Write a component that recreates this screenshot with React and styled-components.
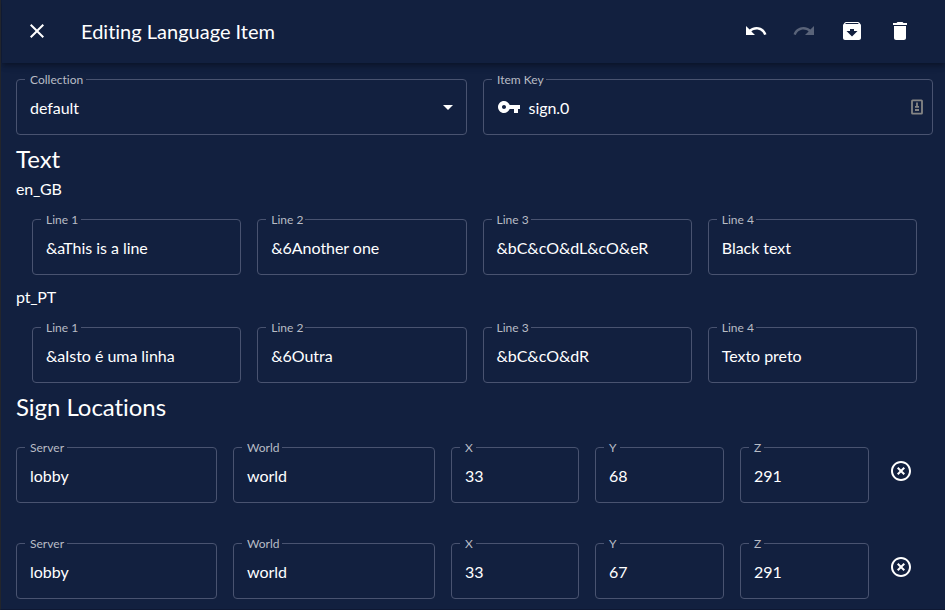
import React from "react";
import styled, { createGlobalStyle } from "styled-components";

const GlobalStyle = createGlobalStyle`
  * { box-sizing: border-box; }
  body { margin: 0; background: #12203f; overflow: hidden; }
`;

const Page = styled.main`
  height: 610px;
  padding-left: 1px;
  border-left: 1px solid #22252c;
  border-bottom: 1px solid #0e1833;
  background: #12203f;
  color: #fff;
  font-family: Lato, sans-serif;
  font-size: 16px;
  font-variant-ligatures: none;
  overflow: hidden;
`;

const Toolbar = styled.header`
  height: 63px;
  padding: 0 21px 0 11px;
  display: flex;
  align-items: center;
  box-shadow: 0 2px 4px -1px rgba(0, 0, 0, 0.2), 0 4px 5px rgba(0, 0, 0, 0.14), 0 1px 10px rgba(0, 0, 0, 0.12);
`;

const IconButton = styled.button`
  width: 48px;
  height: 48px;
  padding: 0 0 1px;
  display: flex;
  align-items: center;
  justify-content: center;
  border: 0;
  background: none;
  color: ${(p) => (p.disabled ? "rgba(255, 255, 255, 0.3)" : "#fff")};
`;

const Icon = styled.svg`
  width: 24px;
  height: 24px;
  flex: none;
  fill: currentColor;
`;

const Title = styled.h1`
  flex: 1;
  margin: 0 0 2px 20px;
  font-size: 20px;
  font-weight: 400;
  line-height: 32px;
`;

const Content = styled.div`
  padding: 16px 12px 0 14px;
`;

const Row = styled.div`
  display: grid;
  grid-template-columns: ${(p) => p.$columns};
  column-gap: 16px;
  margin: ${(p) => p.$margin || "0"};
`;

const FieldBox = styled.fieldset`
  height: 61px;
  min-width: 0;
  margin: -5px 0 0;
  padding: 0 8px;
  border: 1px solid #495370;
  border-radius: 4px;
`;

const FieldLabel = styled.legend`
  height: 11px;
  padding: 0 ${(p) => (p.$tight ? 2 : 3)}px 0 5px;
  color: #b8bcc5;
  font-size: 12px;
  line-height: 11px;
  letter-spacing: 0.02px;
  white-space: nowrap;
`;

const FieldBody = styled.div`
  height: 44px;
  padding: 0 5px;
  display: flex;
  align-items: center;
`;

const Value = styled.span`
  flex: 1;
  white-space: nowrap;
  line-height: 19px;
  letter-spacing: -0.04px;
`;

const Adornment = styled.span`
  display: flex;
  margin: ${(p) => p.$margin};
`;

const SectionTitle = styled.h2`
  margin: 0;
  font-size: 24px;
  font-weight: 400;
  line-height: 32px;
  letter-spacing: -0.05px;
`;

const Locale = styled.p`
  margin: 0;
  padding-top: 2px;
  line-height: 24px;
  letter-spacing: -0.2px;
`;

const RemoveButton = styled(IconButton)`
  width: 32px;
  height: 49px;
`;

const paths = {
  close: "M19 6.41L17.59 5 12 10.59 6.41 5 5 6.41 10.59 12 5 17.59 6.41 19 12 13.41 17.59 19 19 17.59 13.41 12z",
  undo: "M12.5 8c-2.65 0-5.05.99-6.9 2.6L2 7v9h9l-3.62-3.62c1.39-1.16 3.16-1.88 5.12-1.88 3.54 0 6.55 2.31 7.6 5.5l2.37-.78C21.08 11.03 17.15 8 12.5 8z",
  redo: "M18.4 10.6C16.55 8.99 14.15 8 11.5 8c-4.65 0-8.58 3.03-9.96 7.22L3.9 16c1.05-3.19 4.05-5.5 7.6-5.5 1.95 0 3.73.72 5.12 1.88L13 16h9V7l-3.6 3.6z",
  archive: "M20.54 5.23l-1.39-1.68C18.88 3.21 18.47 3 18 3H6c-.47 0-.88.21-1.16.55L3.46 5.23C3.17 5.57 3 6.02 3 6.5V19c0 1.1.9 2 2 2h14c1.1 0 2-.9 2-2V6.5c0-.48-.17-.93-.46-1.27zM12 17.5L6.5 12H10v-2h4v2h3.5L12 17.5zM5.12 5l.81-1h12l.94 1H5.12z",
  trash: "M6 19c0 1.1.9 2 2 2h8c1.1 0 2-.9 2-2V7H6v12zM19 4h-3.5l-1-1h-5l-1 1H5v2h14V4z",
  arrow: "M7 10l5 5 5-5z",
  key: "M12.65 10C11.83 7.67 9.61 6 7 6c-3.31 0-6 2.69-6 6s2.69 6 6 6c2.61 0 4.83-1.67 5.65-4H17v4h4v-4h2v-4H12.65zM7 14c-1.1 0-2-.9-2-2s.9-2 2-2 2 .9 2 2-.9 2-2 2z",
  remove: "M14.59 8L12 10.59 9.41 8 8 9.41 10.59 12 8 14.59 9.41 16 12 13.41 14.59 16 16 14.59 13.41 12 16 9.41 14.59 8zM12 2C6.47 2 2 6.47 2 12s4.47 10 10 10 10-4.47 10-10S17.53 2 12 2zm0 18c-4.41 0-8-3.59-8-8s3.59-8 8-8 8 3.59 8 8-3.59 8-8 8z",
};

const Glyph = ({ name }) => (
  <Icon viewBox="0 0 24 24" aria-hidden="true">
    <path d={paths[name]} />
  </Icon>
);

const AutofillIcon = styled.svg`
  width: 12px;
  height: 16px;
  fill: none;
`;

function Field({ label, value, start, end, tight }) {
  return (
    <FieldBox>
      <FieldLabel $tight={tight}>{label}</FieldLabel>
      <FieldBody>
        {start}
        <Value>{value}</Value>
        {end}
      </FieldBody>
    </FieldBox>
  );
}

const locales = [
  { name: "en_GB", lines: ["&aThis is a line", "&6Another one", "&bC&cO&dL&cO&eR", "Black text"] },
  { name: "pt_PT", lines: ["&aIsto é uma linha", "&6Outra", "&bC&cO&dR", "Texto preto"] },
];

const locations = [
  { Server: "lobby", World: "world", X: "33", Y: "68", Z: "291" },
  { Server: "lobby", World: "world", X: "33", Y: "67", Z: "291" },
];

export default function App() {
  return (
    <Page>
      <GlobalStyle />
      <Toolbar>
        <IconButton aria-label="Close"><Glyph name="close" /></IconButton>
        <Title>Editing Language Item</Title>
        <IconButton aria-label="Undo"><Glyph name="undo" /></IconButton>
        <IconButton aria-label="Redo" disabled><Glyph name="redo" /></IconButton>
        <IconButton aria-label="Archive"><Glyph name="archive" /></IconButton>
        <IconButton aria-label="Delete"><Glyph name="trash" /></IconButton>
      </Toolbar>
      <Content>
        <Row $columns="451px 450px">
          <Field
            label="Collection"
            value="default"
            end={<Adornment $margin="0 -7px 0 0"><Glyph name="arrow" /></Adornment>}
          />
          <Field
            label="Item Key"
            tight
            value="sign.0"
            start={<Adornment $margin="0 7.5px 0 0"><Glyph name="key" /></Adornment>}
            end={
              <Adornment $margin="0 -4px 0 0">
                <AutofillIcon viewBox="0 0 12 16">
                  <rect x="1" y="1.3" width="10" height="13.4" rx="0.6" stroke="#858585" strokeWidth="1.8" />
                  <path d="M6 3.5v4" stroke="#858585" strokeWidth="1.8" />
                  <path d="M4 7.8h4M4 11h4" stroke="#858585" strokeWidth="1.8" />
                </AutofillIcon>
              </Adornment>
            }
          />
        </Row>
        <Row $columns="1fr" $margin="8px 0 0">
          <SectionTitle>Text</SectionTitle>
        </Row>
        {locales.map((locale) => (
          <section key={locale.name}>
            <Locale>{locale.name}</Locale>
            <Row $columns="repeat(4, 1fr)" $margin="18px 16px 8px">
              {locale.lines.map((line, i) => (
                <Field key={i} label={`Line ${i + 1}`} value={line} tight={i > 0} />
              ))}
            </Row>
          </section>
        ))}
        <SectionTitle>Sign Locations</SectionTitle>
        {locations.map((location, i) => (
          <Row key={i} $columns="201px 202px 128px 129px 129px 32px" $margin={i ? "40px 0 0" : "24px 0 0"}>
            {Object.entries(location).map(([label, value]) => (
              <Field key={label} label={label} value={value} tight={label === "World"} />
            ))}
            <RemoveButton aria-label="Remove location"><Glyph name="remove" /></RemoveButton>
          </Row>
        ))}
      </Content>
    </Page>
  );
}
